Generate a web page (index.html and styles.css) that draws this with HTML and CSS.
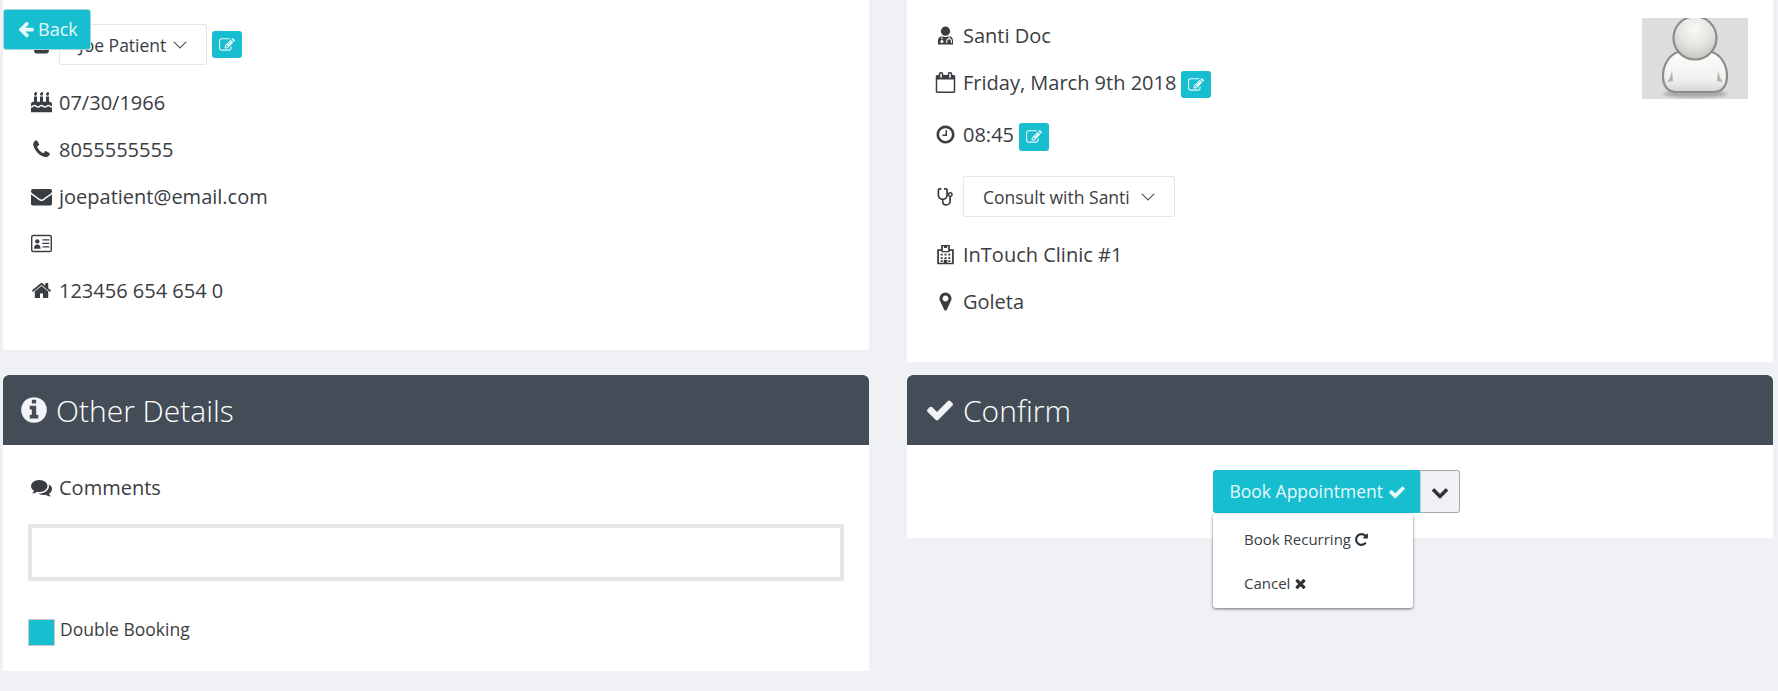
FILE: index.html
```html
<!DOCTYPE html>
<html lang="en">
<head>
<meta charset="utf-8">
<title>Appointment</title>
<link rel="stylesheet" href="styles.css">
</head>
<body>
<svg class="sprite" aria-hidden="true">
  <symbol id="i-check" viewBox="0 0 1792 1792"><path d="M1671 566q0 40-28 68l-724 724-136 136q-28 28-68 28t-68-28l-136-136-362-362q-28-28-28-68t28-68l136-136q28-28 68-28t68 28l294 295 656-657q28-28 68-28t68 28l136 136q28 28 28 68z"/></symbol>
  <symbol id="i-times" viewBox="0 0 1792 1792"><path d="M1490 1322q0 40-28 68l-136 136q-28 28-68 28t-68-28l-294-294-294 294q-28 28-68 28t-68-28l-136-136q-28-28-28-68t28-68l294-294-294-294q-28-28-28-68t28-68l136-136q28-28 68-28t68 28l294 294 294-294q28-28 68-28t68 28l136 136q28 28 28 68t-28 68l-294 294 294 294q28 28 28 68z"/></symbol>
  <symbol id="i-chev" viewBox="0 0 1792 1792"><path d="M1683 808l-742 741q-19 19-45 19t-45-19l-742-741q-19-19-19-45.5t19-45.5l166-165q19-19 45-19t45 19l531 531 531-531q19-19 45-19t45 19l166 165q19 19 19 45.5t-19 45.5z"/></symbol>
  <symbol id="i-left" viewBox="0 0 1792 1792"><path d="M1664 896v128q0 53-32.5 90.5t-84.5 37.5h-704l293 294q38 36 38 90t-38 90l-75 76q-37 37-90 37-52 0-91-37l-651-652q-37-37-37-90 0-52 37-91l651-650q38-38 91-38 52 0 90 38l75 74q38 38 38 91t-38 91l-293 293h704q52 0 84.5 37.5t32.5 90.5z"/></symbol>
  <symbol id="i-phone" viewBox="0 0 1792 1792"><path d="M1600 1240q0 27-10 70.5t-21 68.5q-21 50-122 106-94 51-186 51-27 0-53-3.5t-57.5-12.5-47-14.5-55.5-20.5-49-18q-98-35-175-83-127-79-264-216t-216-264q-48-77-83-175-3-9-18-49t-20.5-55.5-14.5-47-12.5-57.5-3.5-53q0-92 51-186 56-101 106-122 25-11 68.5-21t70.5-10q14 0 21 3 18 6 53 76 11 19 30 54t35 63.5 31 53.5q3 4 17.5 25t21.5 35.5 7 28.5q0 20-28.5 50t-62 55-62 53-28.5 46q0 9 5 22.5t8.5 20.5 14 24 11.5 19q76 137 174 235t235 174q2 1 19 11.5t24 14 20.5 8.5 22.5 5q18 0 46-28.5t53-62 55-62 50-28.5q14 0 28.5 7t35.5 21.5 25 17.5q25 15 53.5 31t63.5 35 54 30q70 35 76 53 3 7 3 21z"/></symbol>
  <symbol id="i-env" viewBox="0 0 1792 1792"><path d="M1792 710v794q0 66-47 113t-113 47h-1472q-66 0-113-47t-47-113v-794q44 49 101 87 362 246 497 345 57 42 92.5 65.5t94.5 48 110 24.5h2q51 0 110-24.5t94.5-48 92.5-65.5q170-123 498-345 57-39 100-87zm0-294q0 79-49 151t-122 123q-376 261-468 325-10 7-42.5 30.5t-54 38-52 32.5-57.5 27-50 9h-2q-23 0-50-9t-57.5-27-52-32.5-54-38-42.5-30.5q-91-64-262-182.5t-205-142.5q-62-42-117-115.5t-55-136.5q0-78 41.5-130t118.5-52h1472q65 0 112.5 47t47.5 113z"/></symbol>
  <symbol id="i-home" viewBox="0 0 1792 1792"><path d="M1472 992v480q0 26-19 45t-45 19h-384v-384h-256v384h-384q-26 0-45-19t-19-45v-480q0-1 .5-3t.5-3l575-474 575 474q1 2 1 6zm223-69l-62 74q-8 9-21 11h-3q-13 0-21-7l-692-577-692 577q-12 8-24 7-13-2-21-11l-62-74q-8-10-7-23.5t11-21.5l719-599q32-26 76-26t76 26l244 204v-195q0-14 9-23t23-9h192q14 0 23 9t9 23v408l219 182q10 8 11 21.5t-7 23.5z"/></symbol>
  <symbol id="i-info" viewBox="0 0 1792 1792"><path d="M1152 1376v-160q0-14-9-23t-23-9h-96v-512q0-14-9-23t-23-9h-320q-14 0-23 9t-9 23v160q0 14 9 23t23 9h96v320h-96q-14 0-23 9t-9 23v160q0 14 9 23t23 9h448q14 0 23-9t9-23zm-128-896v-160q0-14-9-23t-23-9h-192q-14 0-23 9t-9 23v160q0 14 9 23t23 9h192q14 0 23-9t9-23zm640 416q0 209-103 385.5t-279.5 279.5-385.5 103-385.5-103-279.5-279.5-103-385.5 103-385.5 279.5-279.5 385.5-103 385.5 103 279.5 279.5 103 385.5z"/></symbol>
  <symbol id="i-marker" viewBox="0 0 1792 1792"><path d="M1152 640q0-106-75-181t-181-75-181 75-75 181 75 181 181 75 181-75 75-181zm256 0q0 109-33 179l-364 774q-16 33-47.5 52t-67.5 19-67.5-19-46.5-52l-365-774q-33-70-33-179 0-212 150-362t362-150 362 150 150 362z"/></symbol>
  <symbol id="i-clock" viewBox="0 0 1792 1792"><path d="M1024 544v448q0 14-9 23t-23 9h-320q-14 0-23-9t-9-23v-64q0-14 9-23t23-9h224v-352q0-14 9-23t23-9h64q14 0 23 9t9 23zm416 352q0-148-73-273t-198-198-273-73-273 73-198 198-73 273 73 273 198 198 273 73 273-73 198-198 73-273zm224 0q0 209-103 385.5t-279.5 279.5-385.5 103-385.5-103-279.5-279.5-103-385.5 103-385.5 279.5-279.5 385.5-103 385.5 103 279.5 279.5 103 385.5z"/></symbol>
  <symbol id="i-repeat" viewBox="0 0 1792 1792"><path d="M1664 256v448q0 26-19 45t-45 19h-448q-42 0-59-40-17-39 14-69l138-138q-148-137-349-137-104 0-198.5 40.5t-163.5 109.5-109.5 163.5-40.5 198.5 40.5 198.5 109.5 163.5 163.5 109.5 198.5 40.5q119 0 225-52t179-147q7-10 23-12 15 0 25 9l137 138q9 8 9.5 20.5t-7.5 22.5q-109 132-264 204.5t-327 72.5q-156 0-298-61t-245-164-164-245-61-298 61-298 164-245 245-164 298-61q147 0 284.5 55.5t244.5 156.5l130-129q29-31 70-14 39 17 39 59z"/></symbol>
  <symbol id="i-comments" viewBox="0 0 1792 1792"><path d="M1408 768q0 139-94 257t-256.5 186.5-353.5 68.5q-86 0-176-16-124 88-278 128-36 9-86 16h-3q-11 0-20.5-8t-11.5-21q-1-3-1-6.5t.5-6.5 2-6l2.5-5 3.5-5.5 4-5 4.5-5 4-4.5q5-6 23-25t26-29.5 22.5-29 25-38.5 20.5-44q-124-72-195-177t-71-224q0-139 94-257t256.5-186.5 353.5-68.5 353.5 68.5 256.5 186.5 94 257zm384 256q0 120-71 224.5t-195 176.5q10 24 20.5 44t25 38.5 22.5 29 26 29.5 23 25q1 1 4 4.5t4.5 5 4 5 3.5 5.5l2.5 5 2 6 .5 6.5-1 6.5q-3 14-13 22t-22 7q-50-7-86-16-154-40-278-128-90 16-176 16-271 0-472-132 58 4 88 4 161 0 309-45t264-129q125-92 192-212t67-254q0-77-23-152 129 71 204 178t75 230z"/></symbol>
  <symbol id="i-edit" viewBox="0 0 1792 1792"><path d="M888 1184l116-116-152-152-116 116v56h96v96h56zm440-720q-16-16-33 1l-350 350q-17 17-1 33t33-1l350-350q17-17 1-33zm80 594v190q0 119-84.5 203.5t-203.5 84.5h-832q-119 0-203.5-84.5t-84.5-203.5v-832q0-119 84.5-203.5t203.5-84.5h832q63 0 117 25 15 7 18 23 3 17-9 29l-49 49q-14 14-32 8-23-6-45-6h-832q-66 0-113 47t-47 113v832q0 66 47 113t113 47h832q66 0 113-47t47-113v-126q0-13 9-22l64-64q15-15 35-7t20 29zm-96-738l288 288-672 672h-288v-288zm444 132l-92 92-288-288 92-92q28-28 68-28t68 28l152 152q28 28 28 68t-28 68z"/></symbol>
  <symbol id="i-cake" viewBox="0 0 1792 1792"><path d="M1792 1344v384h-1792v-384q45 0 85-14t59-27.5 47-37.5q30-27 51.5-38t56.5-11q24 0 44 7t31 15 33 27q29 25 47 38t58 27 86 14q45 0 85-14.5t58-27 48-37.5q21-19 32.5-27t31-15 43.5-7q35 0 56.5 11t51.5 38q28 24 47 37.5t59 27.5 85 14 85-14 59-27.5 47-37.5q30-27 51.5-38t56.5-11q34 0 55.5 11t51.5 38q29 25 47 38t58 27 86 14zm0-320v192q-24 0-44-7t-31-15-33-27q-29-25-47-38t-58-27-85-14q-46 0-86 14t-58 27-47 38q-22 19-33 27t-31 15-44 7q-35 0-56.5-11t-51.5-38q-29-25-47-38t-58-27-86-14q-45 0-85 14.5t-58 27-48 37.5q-21 19-32.5 27t-31 15-43.5 7q-35 0-56.5-11t-51.5-38q-28-24-47-37.5t-59-27.5-85-14q-46 0-86 14t-58 27-47 38q-30 27-51.5 38t-56.5 11v-192q0-80 56-136t136-56h64v-448h256v448h256v-448h256v448h256v-448h256v448h64q80 0 136 56t56 136zm-1280-864q0 77-36 118.5t-92 41.5q-53 0-90.5-37.5t-37.5-90.5q0-29 9.5-51t23.5-34 31-28 31-31.5 23.5-44.5 9.5-67q38 0 83 74t45 150zm512 0q0 77-36 118.5t-92 41.5q-53 0-90.5-37.5t-37.5-90.5q0-29 9.5-51t23.5-34 31-28 31-31.5 23.5-44.5 9.5-67q38 0 83 74t45 150zm512 0q0 77-36 118.5t-92 41.5q-53 0-90.5-37.5t-37.5-90.5q0-29 9.5-51t23.5-34 31-28 31-31.5 23.5-44.5 9.5-67q38 0 83 74t45 150z"/></symbol>
  <symbol id="i-cal" viewBox="0 0 1792 1792"><path d="M192 1664h1408v-1024h-1408v1024zm384-1216v-288q0-14-9-23t-23-9h-64q-14 0-23 9t-9 23v288q0 14 9 23t23 9h64q14 0 23-9t9-23zm768 0v-288q0-14-9-23t-23-9h-64q-14 0-23 9t-9 23v288q0 14 9 23t23 9h64q14 0 23-9t9-23zm384-64v1280q0 52-38 90t-90 38h-1408q-52 0-90-38t-38-90v-1280q0-52 38-90t90-38h128v-96q0-66 47-113t113-47h64q66 0 113 47t47 113v96h384v-96q0-66 47-113t113-47h64q66 0 113 47t47 113v96h128q52 0 90 38t38 90z"/></symbol>
  <symbol id="i-user" viewBox="0 0 1792 1792"><path d="M1536 1399q0 109-62.5 187t-150.5 78h-854q-88 0-150.5-78t-62.5-187q0-85 8.5-160.5t31.5-152 58.5-131 94-89 134.5-34.5q131 128 313 128t313-128q76 0 134.5 34.5t94 89 58.5 131 31.5 152 8.5 160.5zm-256-887q0 159-112.5 271.5t-271.5 112.5-271.5-112.5-112.5-271.5 112.5-271.5 271.5-112.5 271.5 112.5 112.5 271.5z"/></symbol>
  <symbol id="i-idcard" viewBox="0 0 24 24"><rect x="0.800" y="2.800" width="22.400" height="18.400" rx="1.800" fill="none" stroke="currentColor" stroke-width="1.600"/><circle cx="7.200" cy="9.500" r="2.500"/><path d="M3.400 18c0-3.400 1.500-5 3.800-5s3.800 1.600 3.800 5z"/><path d="M13 7.800h8M13 11.800h8M13 15.800h8" fill="none" stroke="currentColor" stroke-width="1.300"/></symbol>
  <symbol id="i-usermd" viewBox="0 0 24 24"><circle cx="12" cy="6.500" r="5.800"/><path d="M2.500 23.500v-5C2.500 15 5 13 7.800 12.600c1.200 1 2.700 1.400 4.200 1.400s3-.4 4.200-1.400c2.800.4 5.300 2.400 5.300 5.900v5z"/><path d="M7.500 13v4" stroke="#fff" stroke-width="1.200"/><circle cx="7.500" cy="19.500" r="1.900" fill="#fff"/><path d="M16.500 13v2.500M13.500 21.500v-2.500c0-1.800 1.300-3 3-3s3 1.200 3 3v2.500" fill="none" stroke="#fff" stroke-width="1.300"/></symbol>
  <symbol id="i-steth" viewBox="0 0 24 24"><path d="M6 2.500H4.200C3.500 2.500 3 3 3 3.700V10c0 3.200 2.500 5.500 5.500 5.500S14 13.200 14 10V3.700c0-.7-.5-1.200-1.200-1.200H11M8.500 15.500v2.700c0 2.600 2 4.300 4.500 4.300s4.800-1.700 4.800-4.300V12" fill="none" stroke="currentColor" stroke-width="2.200" stroke-linecap="round"/><circle cx="18" cy="9.500" r="2.300" fill="none" stroke="currentColor" stroke-width="1.800"/></symbol>
  <symbol id="i-hospital" viewBox="0 0 24 24"><path fill-rule="evenodd" d="M7 1h10v5h4.500v17h-19V6H7zM9 2.500v5.500h6V2.500h-1.200v2h-3.600v-2zM4.500 8v13.500H10V18h4v3.500h5.500V8H16.500v1.500h-9V8zM6.500 11h2.300v2.200H6.500zM10.800 11h2.400v2.200h-2.400zM15.200 11h2.300v2.200h-2.300zM6.500 15h2.300v2.200H6.500zM10.800 15h2.400v2.200h-2.400zM15.200 15h2.300v2.200h-2.300zM6.500 18.600h2.300v2H6.500zM15.200 18.600h2.300v2h-2.300z"/></symbol>
  <symbol id="i-caret" viewBox="0 0 14 8"><path d="M0.700 0.700L7 7L13.300 0.700" fill="none" stroke="currentColor" stroke-width="1.100"/></symbol>
</svg>

<a class="back-btn" href="#"><svg class="ic-back"><use href="#i-left"/></svg>Back</a>

<main class="page">
  <section class="col">
    <div class="card patient">
      <div class="row row-first">
        <svg class="ic"><use href="#i-user"/></svg>
        <button class="select select-patient">Joe Patient<svg class="caret"><use href="#i-caret"/></svg></button>
        <button class="edit"><svg><use href="#i-edit"/></svg></button>
      </div>
      <div class="row"><svg class="ic"><use href="#i-cake"/></svg>07/30/1966</div>
      <div class="row"><svg class="ic"><use href="#i-phone"/></svg>8055555555</div>
      <div class="row"><svg class="ic"><use href="#i-env"/></svg>joepatient@email.com</div>
      <div class="row"><svg class="ic"><use href="#i-idcard"/></svg></div>
      <div class="row"><svg class="ic"><use href="#i-home"/></svg>123456 654 654 0</div>
    </div>
    <div class="panel panel-details">
      <h2 class="panel-head"><svg class="ic-head"><use href="#i-info"/></svg>Other Details</h2>
      <div class="details-body">
        <div class="row"><svg class="ic"><use href="#i-comments"/></svg>Comments</div>
        <textarea class="comments" aria-label="Comments"></textarea>
        <label class="check"><span class="box"></span><span class="check-label">Double Booking</span></label>
      </div>
    </div>
  </section>

  <section class="col">
    <div class="card provider">
      <div class="avatar">
        <svg viewBox="0 0 106 81">
          <defs>
            <radialGradient id="head" cx="50%" cy="30%" r="65%"><stop offset="0" stop-color="#f8f8f6"/><stop offset=".6" stop-color="#e4e4e1"/><stop offset="1" stop-color="#c9c9c6"/></radialGradient>
            <linearGradient id="torso" x1="0" y1="0" x2="0" y2="1"><stop offset="0" stop-color="#fdfdfc"/><stop offset=".7" stop-color="#f0f0ee"/><stop offset="1" stop-color="#d4d4d2"/></linearGradient>
            <filter id="soft"><feGaussianBlur stdDeviation=".5"/></filter>
            <filter id="softer"><feGaussianBlur stdDeviation="1.500"/></filter>
          </defs>
          <rect width="106" height="81" fill="#dddddd"/>
          <ellipse cx="53" cy="76" rx="32" ry="3.500" fill="#a8a8a8" filter="url(#softer)"/>
          <g filter="url(#soft)">
            <path d="M36 34C27 37 21 47 21 58c0 10 5 16 13 16h38c8 0 13-6 13-16 0-11-6-21-15-24z" fill="url(#torso)" stroke="#8c8c89" stroke-width="2.200"/>
            <path d="M30 53c-1 5-3 9-5 11l6-1zM76 53c1 5 3 9 5 11l-6-1z" fill="#b0b0ad"/>
            <circle cx="53" cy="20" r="21.500" fill="url(#head)" stroke="#8c8c89" stroke-width="2.200"/>
          </g>
        </svg>
      </div>
      <div class="row row-doc"><svg class="ic ic-sm"><use href="#i-usermd"/></svg>Santi Doc</div>
      <div class="row"><svg class="ic"><use href="#i-cal"/></svg>Friday, March 9th 2018<button class="edit edit-inline"><svg><use href="#i-edit"/></svg></button></div>
      <div class="row row-time"><svg class="ic"><use href="#i-clock"/></svg>08:45<button class="edit edit-inline edit-tall"><svg><use href="#i-edit"/></svg></button></div>
      <div class="row row-select">
        <svg class="ic ic-sm"><use href="#i-steth"/></svg>
        <button class="select select-consult">Consult with Santi<svg class="caret"><use href="#i-caret"/></svg></button>
      </div>
      <div class="row"><svg class="ic ic-hospital"><use href="#i-hospital"/></svg>InTouch Clinic #1</div>
      <div class="row"><svg class="ic"><use href="#i-marker"/></svg>Goleta</div>
    </div>
    <div class="panel panel-confirm">
      <h2 class="panel-head"><svg class="ic-head ic-head-check"><use href="#i-check"/></svg>Confirm</h2>
      <div class="confirm-body">
        <div class="split">
          <button class="book">Book Appointment <svg><use href="#i-check"/></svg></button>
          <button class="toggle"><svg><use href="#i-chev"/></svg></button>
          <ul class="menu">
            <li>Book Recurring <svg><use href="#i-repeat"/></svg></li>
            <li>Cancel <svg><use href="#i-times"/></svg></li>
          </ul>
        </div>
      </div>
    </div>
  </section>
</main>
</body>
</html>
```

FILE: styles.css
```css
* { box-sizing: border-box; }

html, body { height: 100%; }

body {
  margin: 0;
  overflow: hidden;
  background: #f0f1f5;
  color: #3a3d42;
  font-family: "Open Sans", "Liberation Sans", sans-serif;
  font-size: 20px;
}

.sprite { display: none; }

.page {
  display: grid;
  grid-template-columns: 866px 866px;
  column-gap: 38px;
  padding-left: 3px;
}

.col { display: flex; flex-direction: column; }

.card { background: #fff; padding: 0 28px; position: relative; }
.patient { height: 350px; padding-top: 24px; margin-bottom: 25px; }
.provider { height: 362px; padding-top: 11px; margin-bottom: 13px; }

.row { display: flex; align-items: center; height: 47px; }
.row-first { height: 41px; margin-bottom: 14px; }
.row-doc { height: 48px; }
.row-time { margin-top: 5px; }
.row-select { height: 41px; margin: 18px 0 14px; }

.ic { width: 21px; height: 21px; margin-right: 7px; fill: currentColor; flex: none; }
.ic-sm { width: 19px; height: 19px; margin-left: 1px; margin-right: 8px; }
.ic-hospital { width: 21px; height: 21px; margin-right: 7px; }

.select {
  display: inline-flex;
  align-items: center;
  height: 41px;
  padding: 0 12px 0 19px;
  border: 1px solid #e6e6e6;
  border-radius: 2px;
  background: #fff;
  color: inherit;
  font: inherit;
  font-size: 17.500px;
}
.select-patient { width: 148px; }
.select-consult { width: 212px; }
.caret { width: 14px; height: 8px; flex: none; margin-left: auto; margin-right: 7px; color: #555; }

.edit {
  display: inline-flex;
  align-items: center;
  justify-content: center;
  width: 30px;
  height: 27px;
  margin-left: 5px;
  padding: 0;
  border: 0;
  border-radius: 3px;
  background: #17becf;
}
.edit svg { width: 16px; height: 16px; fill: #e8f9fb; }
.edit-inline { margin-top: 4px; }
.edit-tall { height: 28px; }

.back-btn {
  position: fixed;
  left: 3px;
  top: 9px;
  display: flex;
  align-items: center;
  width: 88px;
  height: 41px;
  padding: 0 0 2px 13px;
  border: 1px solid #a5d8de;
  border-radius: 3px;
  background: #17becf;
  color: #e6f9fb;
  font-size: 18px;
  text-decoration: none;
  z-index: 5;
}
.ic-back { width: 18px; height: 18px; margin-right: 3px; fill: currentColor; }

.panel { background: #fff; }
.panel-head {
  display: flex;
  align-items: center;
  height: 70px;
  margin: 0;
  padding-left: 16px;
  border-radius: 6px 6px 0 0;
  background: #444d57;
  color: #fff;
  font-size: 30px;
  font-weight: 300;
}
.ic-head { width: 30px; height: 30px; margin-right: 7px; fill: #f2f3f6; }
.ic-head-check { margin-left: 2px; margin-right: 8px; }

.panel-details { height: 296px; }
.details-body { padding: 19px 28px 0; }

.comments {
  display: block;
  width: 816px;
  height: 57px;
  margin: 13px 0 0 -3px;
  border: 4px solid #e5e6e8;
  border-radius: 2px;
  background: #fff;
  resize: none;
  outline: none;
}

.check { display: flex; align-items: center; gap: 5px; margin: 36px 0 0 -3px; font-size: 17.500px; }
.check-label { margin-bottom: 6px; }
.box { width: 27px; height: 27px; border: 1px solid #c9c9c9; background: #17becf; }

.panel-confirm { height: 163px; }
.confirm-body { display: flex; justify-content: center; padding: 25px 0 0 0; }

.split { position: relative; display: flex; height: 43px; margin-left: -7px; }
.book {
  width: 207px;
  padding: 0 0 2px 2px;
  border: 0;
  border-radius: 3px 0 0 3px;
  background: #17becf;
  color: #e6f9fb;
  font: inherit;
  font-size: 17.500px;
}
.book svg { width: 18px; height: 18px; fill: #e6f9fb; vertical-align: -3px; }
.toggle {
  display: flex;
  align-items: center;
  justify-content: center;
  width: 40px;
  padding: 0;
  border: 1px solid #a8a9ad;
  border-left-color: #c9cace;
  border-radius: 0 3px 3px 0;
  background: #f0f1f5;
}
.toggle svg { width: 18px; height: 18px; fill: #2f3237; }

.menu {
  position: absolute;
  left: 0;
  top: 44px;
  width: 200px;
  height: 94px;
  margin: 0;
  padding: 3px 0;
  border-radius: 3px;
  background: #fff;
  box-shadow: 0 1px 3px rgba(0, 0, 0, .55);
  list-style: none;
  font-size: 15px;
  z-index: 3;
}
.menu li { display: flex; align-items: center; gap: 3px; height: 44px; padding-left: 31px; }
.menu svg { width: 15px; height: 15px; fill: #2f3237; }

.avatar { position: absolute; top: 18px; right: 25px; width: 106px; height: 81px; }
.avatar svg { display: block; width: 106px; height: 81px; }
```
